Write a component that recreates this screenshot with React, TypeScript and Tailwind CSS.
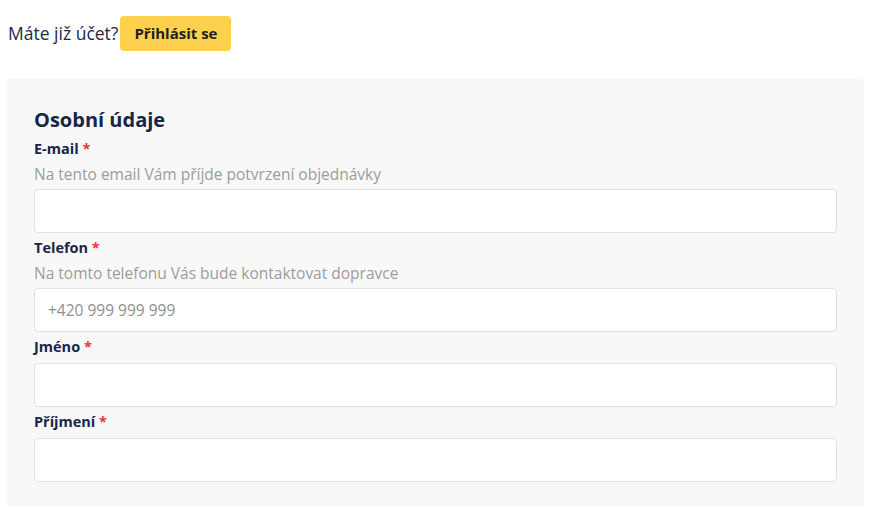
const font = { fontFamily: '"Open Sans", "Noto Sans", sans-serif' };

type Field = {
  label: string;
  hint?: string;
  placeholder?: string;
};

const fields: Field[] = [
  { label: 'E-mail', hint: 'Na tento email Vám příjde potvrzení objednávky' },
  { label: 'Telefon', hint: 'Na tomto telefonu Vás bude kontaktovat dopravce', placeholder: '+420 999 999 999' },
  { label: 'Jméno' },
  { label: 'Příjmení' },
];

export default function App() {
  return (
    <div className="bg-white min-h-[509px] pl-[7px] pr-4 pt-4" style={font}>
      <div className="flex items-center pl-px">
        <span className="text-[17.5px] text-[#1c2a47]">Máte již účet?</span>
        <button className="ml-[2px] h-[35px] rounded-[4px] bg-[#fdd04e] px-[14px] text-[15px] font-bold text-[#1f1f1f]">
          Přihlásit se
        </button>
      </div>

      <div className="mt-[28px] w-[857px] rounded-t-[4px] bg-[#f8f8f8] px-[27px] pt-[27px] pb-6">
        <h2 className="text-[20px] font-bold leading-7 text-[#172648]">Osobní údaje</h2>

        <div className="mt-[5px] flex flex-col gap-[5px]">
          {fields.map(f => (
            <div key={f.label}>
              <label className="block text-[14.5px] font-bold leading-5 text-[#172648]">
                {f.label} <span className="text-[#e0393e]">*</span>
              </label>
              {f.hint && (
                <p className="mt-[5px] text-[15.5px] leading-5 text-[#9c9c9c]">{f.hint}</p>
              )}
              <input
                type="text"
                placeholder={f.placeholder}
                className={`block h-[44px] w-full rounded-[4px] border border-[#e1e1e1] bg-white px-[13px] text-[15.5px] text-[#333] placeholder:text-[#8f8f8f] outline-none ${f.hint ? 'mt-[5px]' : 'mt-[6px]'}`}
              />
            </div>
          ))}
        </div>
      </div>
    </div>
  );
}
